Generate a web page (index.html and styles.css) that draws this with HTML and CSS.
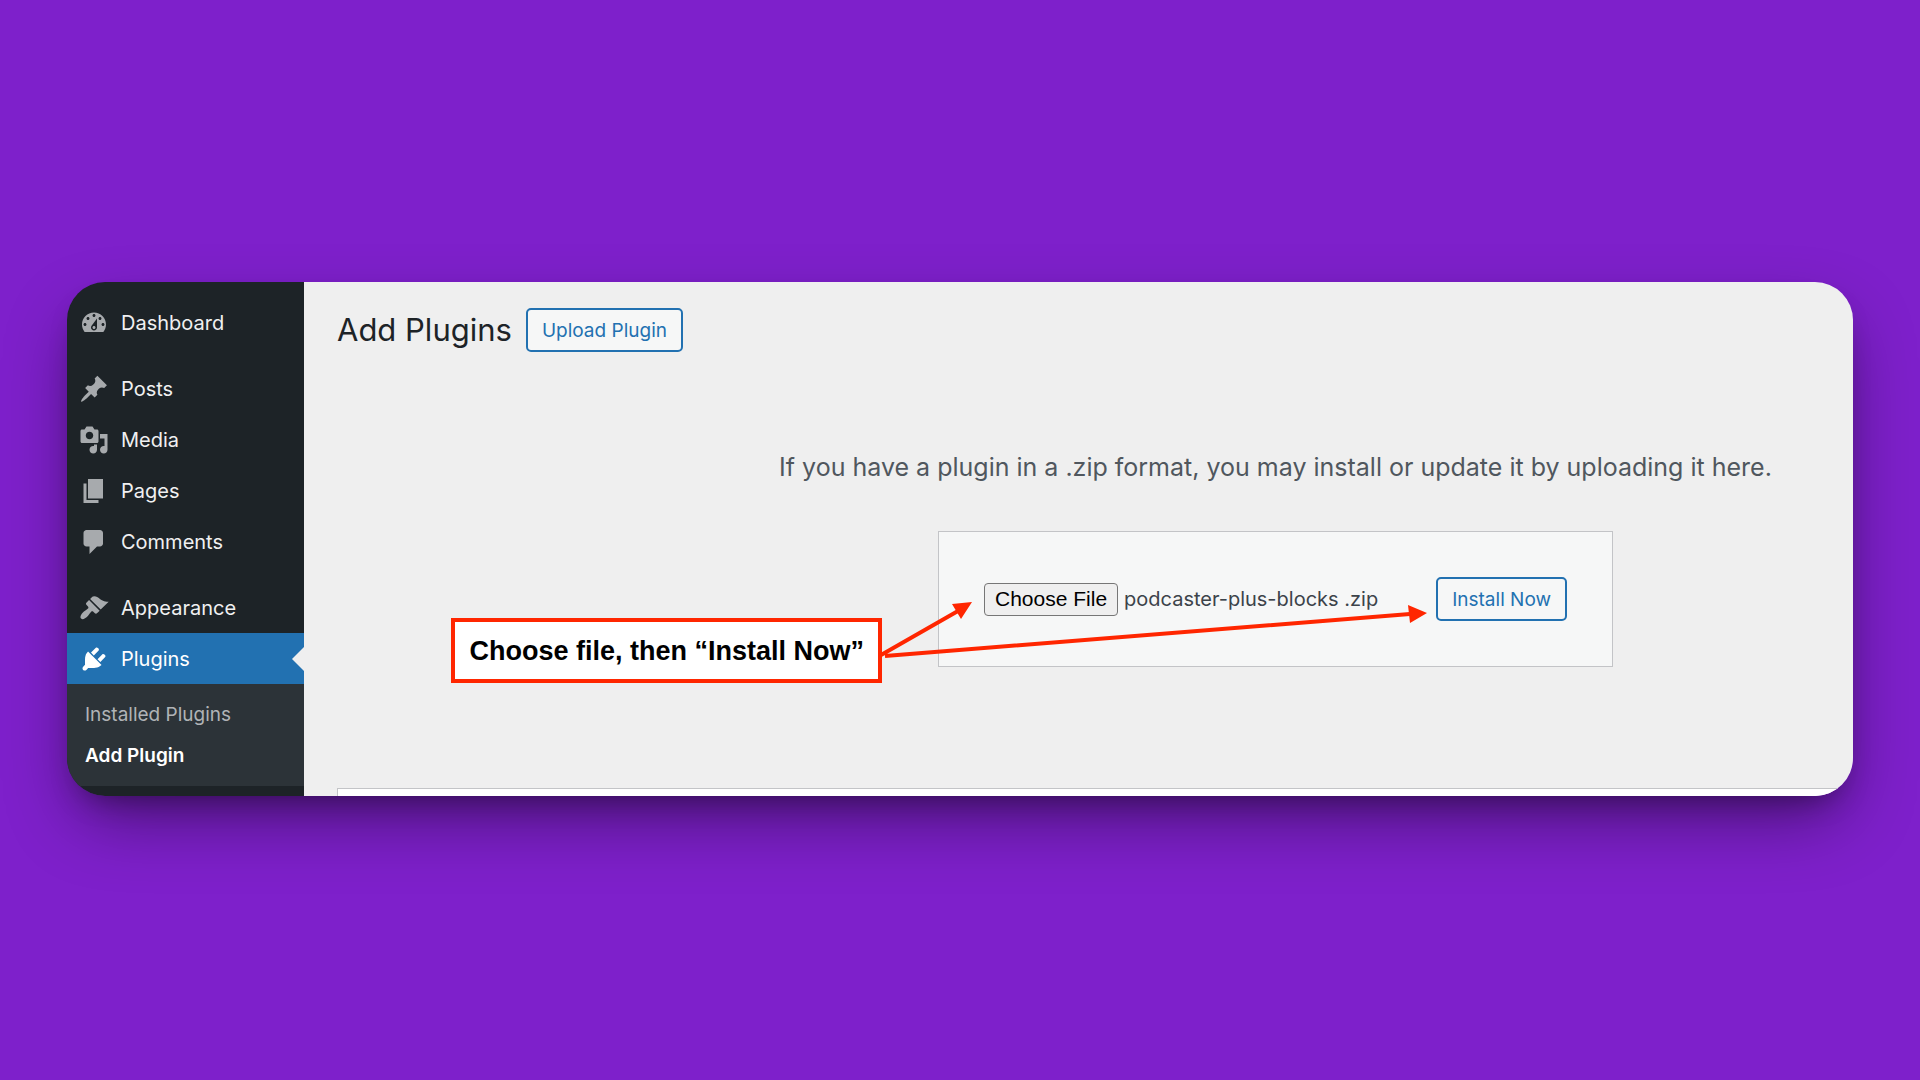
FILE: index.html
```html
<!DOCTYPE html>
<html lang="en">
<head>
  <meta charset="utf-8">
  <meta name="viewport" content="width=device-width, initial-scale=1">
  <title>Add Plugins</title>
  <link rel="stylesheet" href="styles.css">
</head>
<body>
  <div class="window">
    <nav class="menu" aria-label="Main menu">
      <ul class="menu-group">
        <li><a class="menu-item" href="#"><svg class="icon" viewBox="0 0 20 20" aria-hidden="true"><path d="M3.76 16h12.48c1.1-1.37 1.76-3.11 1.76-5 0-4.42-3.58-8-8-8s-8 3.58-8 8c0 1.89.66 3.63 1.76 5zM10 4c.55 0 1 .45 1 1s-.45 1-1 1-1-.45-1-1 .45-1 1-1zM6 6c.55 0 1 .45 1 1s-.45 1-1 1-1-.45-1-1 .45-1 1-1zm8 0c.55 0 1 .45 1 1s-.45 1-1 1-1-.45-1-1 .45-1 1-1zm-5.37 5.55L12 7v6c0 1.1-.9 2-2 2s-2-.9-2-2c0-.57.24-1.08.63-1.45zM4 10c.55 0 1 .45 1 1s-.45 1-1 1-1-.45-1-1 .45-1 1-1zm12 0c.55 0 1 .45 1 1s-.45 1-1 1-1-.45-1-1 .45-1 1-1zm-5 3c0-.55-.45-1-1-1s-1 .45-1 1 .45 1 1 1 1-.45 1-1z"/></svg>Dashboard</a></li>
      </ul>
      <ul class="menu-group">
        <li><a class="menu-item" href="#"><svg class="icon" viewBox="0 0 20 20" aria-hidden="true"><path d="M10.44 3.02l1.82-1.82 6.36 6.35-1.83 1.82c-1.05-.68-2.48-.57-3.41.36l-.75.75c-.92.93-1.04 2.35-.35 3.41l-1.83 1.82-2.41-2.41-2.8 2.79c-.42.42-3.38 2.71-3.8 2.29s1.86-3.39 2.28-3.81l2.79-2.79L4.1 9.36l1.83-1.82c1.05.69 2.48.57 3.4-.36l.75-.75c.93-.92 1.05-2.35.36-3.41z"/></svg>Posts</a></li>
        <li><a class="menu-item" href="#"><svg class="icon" viewBox="0 0 20 20" aria-hidden="true"><path d="M13 11V4c0-.55-.45-1-1-1h-1.67L9 1H5L3.67 3H2c-.55 0-1 .45-1 1v7c0 .55.45 1 1 1h10c.55 0 1-.45 1-1zM7 4.5c1.38 0 2.5 1.12 2.5 2.5S8.38 9.5 7 9.5 4.5 8.38 4.5 7 5.62 4.5 7 4.5zM14 6h5v10.5c0 1.38-1.12 2.5-2.5 2.5S14 17.88 14 16.5s1.12-2.5 2.5-2.5c.17 0 .34.02.5.05V9h-3V6zm-4 8.05V13h2v3.5c0 1.38-1.12 2.5-2.5 2.5S7 17.88 7 16.5 8.12 14 9.5 14c.17 0 .34.02.5.05z"/></svg>Media</a></li>
        <li><a class="menu-item" href="#"><svg class="icon" viewBox="0 0 20 20" aria-hidden="true"><path d="M6 15V2h10v13H6zm-1 1h8v2H3V5h2v11z"/></svg>Pages</a></li>
        <li><a class="menu-item" href="#"><svg class="icon" viewBox="0 0 20 20" aria-hidden="true"><path d="M5 2h9c1.1 0 2 .9 2 2v7c0 1.1-.9 2-2 2h-2l-5 5v-5H5c-1.1 0-2-.9-2-2V4c0-1.1.9-2 2-2z"/></svg>Comments</a></li>
      </ul>
      <ul class="menu-group">
        <li><a class="menu-item" href="#"><svg class="icon" viewBox="0 0 20 20" aria-hidden="true"><path d="M14.48 11.06L7.41 3.99l1.5-1.5c.5-.56 2.3-.47 3.51.32 1.21.8 1.43 1.28 2.91 2.1 1.18.64 2.45 1.26 4.45.85zm-.71.71L6.7 4.7 4.93 6.47c-.39.39-.39 1.02 0 1.41l1.06 1.06c.39.39.39 1.03 0 1.42-.6.6-1.43 1.11-2.21 1.69-.35.26-.7.53-1.01.84C1.43 14.23.4 16.08 1.4 17.07c.99 1 2.84-.03 4.18-1.36.31-.31.58-.66.85-1.02.57-.78 1.08-1.61 1.69-2.21.39-.39 1.02-.39 1.41 0l1.06 1.06c.39.39 1.02.39 1.41 0z"/></svg>Appearance</a></li>
        <li>
          <a class="menu-item current" href="#"><svg class="icon" viewBox="0 0 20 20" aria-hidden="true"><path d="M13.11 4.36L9.87 7.6 8 5.73l3.24-3.24c.35-.34 1.05-.2 1.56.32.52.51.66 1.21.31 1.55zm-8 1.77l.91-1.12 9.01 9.01-1.19.84c-.71.71-2.63 1.16-3.82 1.16H6.14L4.9 17.26c-.59.59-1.54.59-2.12 0-.59-.58-.59-1.53 0-2.12l1.24-1.24v-3.88c0-1.13.4-3.19 1.09-3.89zm7.26 3.97l3.24-3.24c.34-.35 1.04-.21 1.55.31.52.51.66 1.21.31 1.55l-3.24 3.25z"/></svg>Plugins</a>
          <ul class="submenu">
            <li><a class="submenu-item" href="#">Installed Plugins</a></li>
            <li><a class="submenu-item active" href="#" aria-current="page">Add Plugin</a></li>
          </ul>
        </li>
      </ul>
    </nav>

    <main class="content">
      <header class="page-head">
        <h1 class="title">Add Plugins</h1>
        <button class="button" type="button">Upload Plugin</button>
      </header>

      <section class="upload">
        <p class="hint">If you have a plugin in a .zip format, you may install or update it by uploading it here.</p>
        <form class="upload-form">
          <div class="file-field">
            <input class="file-input" id="pluginzip" type="file" accept=".zip" tabindex="-1" aria-labelledby="choose">
            <button class="file-button" id="choose" type="button">Choose File</button>
            <label class="file-name" for="pluginzip">podcaster-plus-blocks .zip</label>
          </div>
          <button class="button" type="button">Install Now</button>

          <svg class="arrows" viewBox="0 0 560 70" aria-hidden="true">
            <path class="arrow-line" d="M7 58L84 14M11 59L536 17"/>
            <path class="arrow-head" d="M98 5L78 7L87 22ZM553 16L534 8L536 26Z"/>
          </svg>
          <strong class="callout">Choose file, then “Install Now”</strong>
        </form>
      </section>

      <div class="filter-bar"></div>
    </main>
  </div>
  <script src="upload.js"></script>
</body>
</html>
```

FILE: styles.css
```css
* {
  box-sizing: border-box;
}

body {
  display: flex;
  align-items: center;
  min-height: 100vh;
  margin: 0;
  padding: 0 67px 2px;
  background: #7e20cb;
  color: #3c434a;
  font: 20px/30px Inter, sans-serif;
}

.window {
  display: flex;
  flex: 1;
  min-width: 0;
  border-radius: 38px;
  box-shadow: 0 30px 70px -10px rgba(0, 0, 0, 0.45), 0 15px 30px -15px rgba(0, 0, 0, 0.4);
}

/* Side menu */

.menu {
  display: flex;
  flex: none;
  flex-direction: column;
  gap: 15px;
  width: 237px;
  padding: 15px 0 10px;
  border-radius: 38px 0 0 38px;
  background: #1d2327;
  overflow: hidden;
}

.menu-group,
.submenu {
  margin: 0;
  padding: 0;
  list-style: none;
}

.menu-item {
  display: flex;
  align-items: center;
  gap: 12px;
  height: 51px;
  padding-left: 12px;
  color: #f0f0f1;
  line-height: 28px;
  text-decoration: none;
}

.icon {
  width: 30px;
  height: 30px;
  fill: #a7aaad;
}

.current {
  position: relative;
  background: #2271b1;
  color: #fff;
}

.current .icon {
  fill: #fff;
}

.current::after {
  position: absolute;
  top: 50%;
  right: 0;
  margin-top: -12px;
  border: 12px solid transparent;
  border-left-width: 0;
  border-right-color: #efefef;
  content: "";
}

.submenu {
  padding: 10px 0;
  background: #2c3338;
}

.submenu-item {
  display: block;
  padding-left: 18px;
  color: #b0b3b6;
  font-size: 19px;
  line-height: 41px;
  text-decoration: none;
}

.active {
  color: #fff;
  font-weight: 600;
}

/* Page */

.content {
  display: flex;
  flex: 1;
  flex-direction: column;
  min-width: 0;
  padding: 25px 0 0 33px;
  border-radius: 0 38px 38px 0;
  background: #efefef;
  overflow: hidden;
}

.page-head {
  display: flex;
  align-items: center;
  gap: 14px;
}

.title {
  margin: 0;
  color: #1d2327;
  font-size: 31px;
  font-weight: 400;
  line-height: 46px;
}

.button {
  height: 44px;
  padding: 2px 14px 0;
  border: 2px solid #2271b1;
  border-radius: 5px;
  background: #f6f7f7;
  color: #2271b1;
  font: 19px/38px Inter, sans-serif;
  white-space: nowrap;
}

.upload {
  display: flex;
  flex-direction: column;
  align-items: center;
  gap: 44px;
  padding: 94px 0 0 361px;
}

.hint {
  margin: 0;
  color: #50575e;
  font-size: 25px;
  line-height: 40px;
}

.upload-form {
  position: relative;
  display: flex;
  align-items: center;
  justify-content: space-between;
  width: 675px;
  height: 136px;
  padding: 0 45px;
  border: 1px solid #c3c4c7;
  background: #f6f7f7;
}

.file-field {
  position: relative;
  display: flex;
  align-items: center;
  gap: 6px;
}

.file-input {
  position: absolute;
  width: 1px;
  height: 1px;
  opacity: 0;
}

.file-button {
  height: 33px;
  padding: 0 10px;
  border: 1px solid #767676;
  border-radius: 4px;
  background: #efefef;
  color: #000;
  font: 21px/30px "Liberation Sans", Arial, sans-serif;
}

/* Notes laid over the form */

.arrows {
  position: absolute;
  top: 65px;
  right: 178px;
  width: 560px;
  height: 70px;
}

.arrow-line {
  fill: none;
  stroke: #ff2600;
  stroke-width: 4;
}

.arrow-head {
  fill: #ff2600;
}

.callout {
  position: absolute;
  top: 86px;
  right: 730px;
  padding: 13px 14px 11px;
  border: 4px solid #ff2600;
  background: #fff;
  color: #000;
  font: bold 27px/33px "Liberation Sans", Arial, sans-serif;
  white-space: nowrap;
}

.filter-bar {
  height: 8px;
  margin-top: auto;
  border: solid #c3c4c7;
  border-width: 1px 0 0 1px;
  background: #fff;
}
```

FILE: upload.js
```js
const fileInput = document.getElementById("pluginzip");
const fileName = document.querySelector(".file-name");

document.getElementById("choose").addEventListener("click", () => fileInput.click());

fileInput.addEventListener("change", () => {
  if (fileInput.files.length) {
    fileName.textContent = fileInput.files[0].name;
  }
});
```
